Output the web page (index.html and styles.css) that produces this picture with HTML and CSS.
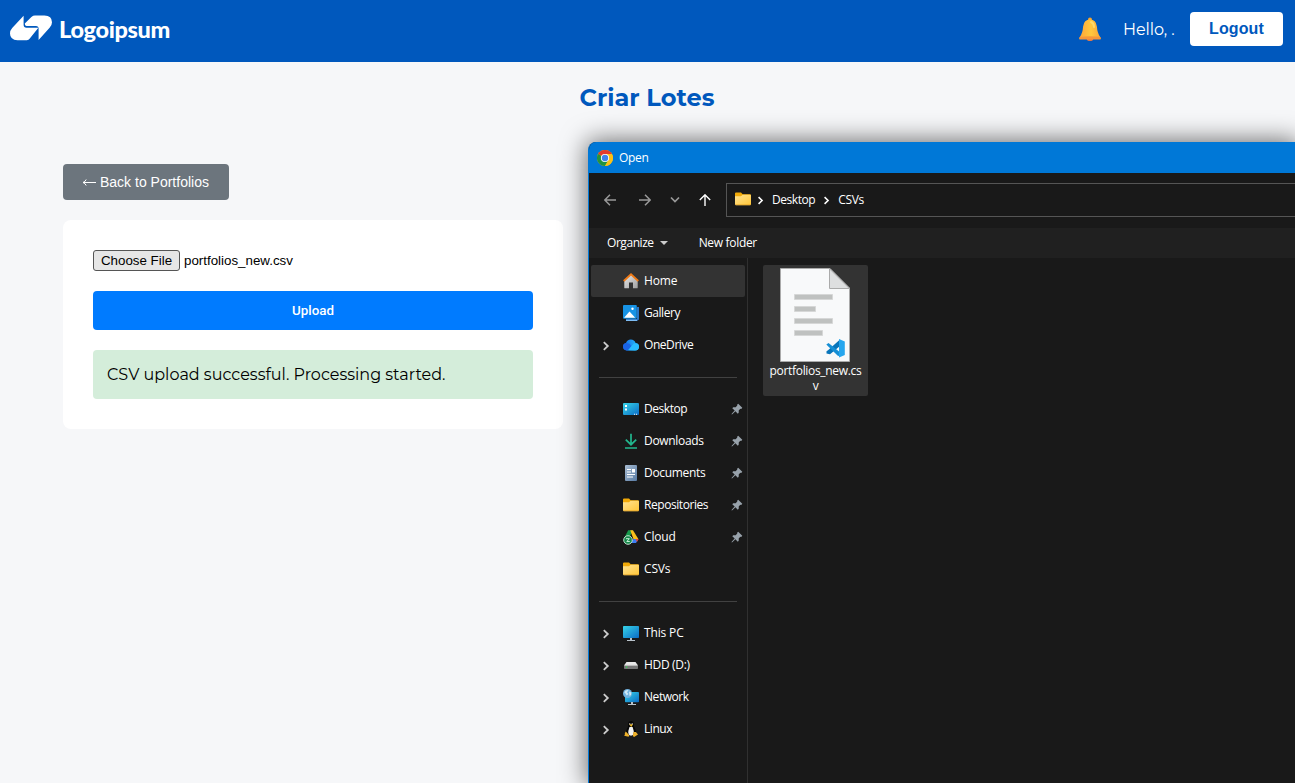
FILE: index.html
```html
<!DOCTYPE html>
<html lang="en">
<head>
<meta charset="utf-8">
<title>Criar Lotes</title>
<link rel="stylesheet" href="styles.css">
</head>
<body>
<svg class="defs" width="0" height="0" aria-hidden="true">
  <defs>
    <linearGradient id="gold" x1="0" y1="0" x2="1" y2="1"><stop offset="0" stop-color="#ffe394"/><stop offset="1" stop-color="#ffc637"/></linearGradient>
    <linearGradient id="screen" x1="0" y1="0" x2="1" y2="1"><stop offset="0" stop-color="#36d4e8"/><stop offset="1" stop-color="#0b6bc5"/></linearGradient>
    <linearGradient id="bell" x1="0" y1="0" x2="1" y2="0"><stop offset="0" stop-color="#ffa63a"/><stop offset=".55" stop-color="#ffc83d"/><stop offset="1" stop-color="#f9a63a"/></linearGradient>
    <linearGradient id="cloud" x1="0" y1="0" x2="1" y2="0"><stop offset="0" stop-color="#1667e8"/><stop offset="1" stop-color="#27c2fb"/></linearGradient>
    <linearGradient id="metal" x1="0" y1="0" x2="1" y2="1"><stop offset="0" stop-color="#e8e8e8"/><stop offset="1" stop-color="#a0a0a0"/></linearGradient>
    <linearGradient id="doc" x1="0" y1="0" x2="1" y2="1"><stop offset="0" stop-color="#a9bdd2"/><stop offset="1" stop-color="#587ba4"/></linearGradient>
  </defs>
  <symbol id="folder" viewBox="0 0 16 14"><path d="M0 1.5Q0 .4 1 .4H6L7.7 2.2H15Q16 2.2 16 3.3V8H0Z" fill="#f2aa08"/><path d="M0 4.2H6L7.7 2.7H15Q16 2.7 16 3.7V12Q16 13.2 14.8 13.2H1.2Q0 13.2 0 12Z" fill="url(#gold)"/><path d="M.4 12.7H15.6" stroke="#e5a52a" stroke-width=".7"/></symbol>
  <symbol id="chev" viewBox="0 0 8 10"><path d="M1.8 1.2 5.8 5 1.8 8.8" fill="none" stroke="currentColor" stroke-width="1.8"/></symbol>
  <symbol id="pin" viewBox="0 0 12 12"><path d="M7.2.7 11.3 4.8 10.2 5.9 9.4 5.7 7.8 7.3 7.7 9.8 6.8 10.7 4.4 8.3 1.3 11.3.6 11.4.7 10.7 3.7 7.6 1.3 5.2 2.2 4.3 4.7 4.2 6.3 2.6 6.1 1.8Z" fill="#98a2ab"/></symbol>
</svg>

<header class="topbar">
  <div class="brand">
    <svg width="42" height="26" viewBox="0 0 42 26"><path fill="#fff" d="M13.6 .8V9.8Q13.6 12.7 16.5 12.7H28.4L19.8 23.6Q18.7 25.2 16.8 25.2H7.5Q0 24.8 0 18.4 0 15.6 2.2 13.1Z"/><path fill="#fff" d="M28.6 25V13.6Q28.6 10.9 26 10.9H16.5Q14.6 10.8 14.8 8.6L21.4 2Q23.2 .6 25 .6H34.4Q42 .9 42 7.3 42 10.4 39.6 12.8Z"/></svg>
    <span class="brand-name">Logoipsum</span>
  </div>
  <div class="account">
    <svg class="bell" width="24" height="26" viewBox="0 0 24 26"><circle cx="12" cy="3.4" r="2" fill="#f6a22e"/><ellipse cx="12" cy="23" rx="3.2" ry="2" fill="#e87845"/><path d="M12 3.4Q18.1 3.4 18.9 10.5 19.3 17 22.2 21V22H1.8V21Q4.7 17 5.1 10.5 5.9 3.4 12 3.4Z" fill="url(#bell)"/><path d="M1.5 21Q12 19.4 22.5 21L23 23Q22.8 23.4 22 23.4H2Q1.2 23.4 1 23Z" fill="#f7973a"/><path d="M13 6Q15.8 7 16 11" stroke="#ffda69" stroke-width="2" fill="none" stroke-linecap="round"/></svg>
    <span class="hello">Hello, .</span>
    <button class="logout">Logout</button>
  </div>
</header>

<main class="page">
  <h1 class="title">Criar Lotes</h1>
  <button class="back"><svg width="14" height="8" viewBox="0 0 14 8"><path d="M14 4.5H1M4.2 1.5Q3.3 3.7 1 4.5 3.3 5.3 4.2 7.5" fill="none" stroke="#fff"/></svg><span>Back to Portfolios</span></button>
  <section class="card">
    <div class="file-row"><button class="choose">Choose File</button><span class="file-name">portfolios_new.csv</span></div>
    <button class="upload"><span>Upload</span></button>
    <p class="success">CSV upload successful. Processing started.</p>
  </section>
</main>

<div class="dialog-layer">
<div class="dialog" role="dialog">
  <div class="dialog-title">
    <svg width="16" height="16" viewBox="0 0 16 16"><circle cx="8" cy="8" r="8" fill="#fbc116"/><path d="M8 8 1.07 4A8 8 0 0 1 14.93 4Z" fill="#e33b2e"/><path d="M8 8 1.07 4A8 8 0 0 0 8 16L11.5 10Z" fill="#229342"/><path d="M8 4H14.93A8 8 0 0 1 8 16L11.5 10Z" fill="#fbc116"/><circle cx="8" cy="8" r="4.1" fill="#fff"/><circle cx="8" cy="8" r="3.2" fill="#4082ed"/></svg>
    <span>Open</span>
  </div>
  <div class="dialog-nav">
    <div class="arrows">
      <svg width="12" height="12" viewBox="0 0 12 12"><path d="M12 6H.8M6 .8.8 6 6 11.2" fill="none" stroke="#999" stroke-width="1.5"/></svg>
      <svg width="12" height="12" viewBox="0 0 12 12"><path d="M0 6H11.2M6 .8 11.2 6 6 11.2" fill="none" stroke="#999" stroke-width="1.5"/></svg>
      <svg width="10" height="12" viewBox="0 0 10 12"><path d="M1 3.5 5 7.5 9 3.5" fill="none" stroke="#999" stroke-width="1.7"/></svg>
      <svg width="12" height="12" viewBox="0 0 12 12"><path d="M6 12V.8M.8 6 6 .8 11.2 6" fill="none" stroke="#fff" stroke-width="1.4"/></svg>
    </div>
    <div class="path">
      <svg class="path-icon" width="16" height="14"><use href="#folder"/></svg>
      <svg class="sep1" width="7" height="9"><use href="#chev"/></svg>
      <span class="tight">Desktop</span>
      <svg class="sep2" width="7" height="9"><use href="#chev"/></svg>
      <span>CSVs</span>
    </div>
  </div>
  <div class="dialog-tools">
    <span class="tight">Organize</span>
    <svg class="caret" width="8" height="4" viewBox="0 0 8 4"><path d="M0 0H8L4 4Z" fill="#ccc"/></svg>
    <span>New folder</span>
  </div>
  <div class="dialog-body">
    <nav class="side">
      <div class="row active"><span class="exp"></span><svg class="ico" viewBox="0 0 16 16"><path d="M1.3 7.5 8 1.5 14.7 7.5V14.8Q14.7 15.3 14 15.3H10V9.5H6V15.3H2Q1.3 15.3 1.3 14.8Z" fill="url(#metal)"/><path d="M.7 8 8 1.3 15.3 8" fill="none" stroke="#ef7a16" stroke-width="1.8"/></svg><span class="loose">Home</span></div>
      <div class="row"><span class="exp"></span><svg class="ico" viewBox="0 0 16 16"><path d="M14 2H16V14.5L14 16H3V14H14Z" fill="#2876c7"/><rect width="13.8" height="13.8" rx="1" fill="#1793e5"/><path d="M1 12.8 6.5 6.5 12.2 12.8Z" fill="#fff"/><circle cx="9.5" cy="3.7" r="1.2" fill="#fff"/><path d="M3 15.4H14" stroke="#7ebcf3" stroke-width="1.2"/></svg><span class="tight">Gallery</span></div>
      <div class="row"><span class="exp"><svg width="8" height="10"><use href="#chev"/></svg></span><svg class="ico" viewBox="0 0 16 16"><path d="M3.8 13.4Q0 13.2 0 9.6 0 6.8 3 6.1 4.1 2.6 7.8 2.6 11.4 2.6 12.7 6.2 16 6.6 16 9.7 16 13.4 12 13.4Z" fill="url(#cloud)"/><path d="M3 6.1Q6.5 5.6 8.6 9.2L4.7 13.4H3.8Q0 13.2 0 9.6 0 6.8 3 6.1Z" fill="#1a64e6"/><path d="M5 13.3 9 8.4Q11 5.8 13 6.3 16 6.7 16 9.8 16 13.4 12 13.4Z" fill="#29bcff"/></svg><span class="tight">OneDrive</span></div>
      <hr class="rule">
      <div class="row"><span class="exp"></span><svg class="ico" viewBox="0 0 16 16"><rect y="2" width="16" height="12" rx="1" fill="url(#screen)"/><path d="M2 4H4V6H2ZM2 7.5H4V9.5H2ZM11 12.8H12V13.8H11ZM13 12.8H14V13.8H13Z" fill="#fff"/></svg><span class="tight">Desktop</span><svg class="pin"><use href="#pin"/></svg></div>
      <div class="row"><span class="exp"></span><svg class="ico" viewBox="0 0 16 16"><path d="M8 .8V11.2M2.8 6.7 8 11.7 13.2 6.7M2 15H14" fill="none" stroke="#22b88f" stroke-width="1.7"/></svg><span>Downloads</span><svg class="pin"><use href="#pin"/></svg></div>
      <div class="row"><span class="exp"></span><svg class="ico" viewBox="0 0 16 16"><rect x="2" width="12" height="16" rx="1" fill="url(#doc)"/><path d="M4 4.5H8M4 7H8M4 9.5H12M4 12H10" stroke="#fff"/><path d="M9 4H12V7.5H9Z" fill="#fff"/></svg><span>Documents</span><svg class="pin"><use href="#pin"/></svg></div>
      <div class="row"><span class="exp"></span><svg class="ico" viewBox="0 -1 16 16"><use href="#folder" width="16" height="14"/></svg><span class="tight">Repositories</span><svg class="pin"><use href="#pin"/></svg></div>
      <div class="row"><span class="exp"></span><svg class="ico" viewBox="0 0 16 16"><path d="M5.2 1.3H9.8L4.3 13 1.2 9Z" fill="#17994b"/><path d="M7.2 1.3H10L15.5 10.3H10.5Z" fill="#fbc01b"/><path d="M10.5 10H15.5L13 14H6.5Z" fill="#3c7cf1"/><path d="M12.5 10H15.5L14 13Z" fill="#e94335"/><circle cx="5" cy="11" r="4.3" fill="#18894b" stroke="#d2e9db" stroke-width=".9"/><path d="M3 9.7H6.4L3.8 12.5H6.8" stroke="#c8efd9" fill="none"/></svg><span class="loose">Cloud</span><svg class="pin"><use href="#pin"/></svg></div>
      <div class="row"><span class="exp"></span><svg class="ico" viewBox="0 -1 16 16"><use href="#folder" width="16" height="14"/></svg><span class="loose">CSVs</span></div>
      <hr class="rule">
      <div class="row"><span class="exp"><svg width="8" height="10"><use href="#chev"/></svg></span><svg class="ico" viewBox="0 0 16 16"><rect y="1" width="16" height="12" rx=".8" fill="url(#screen)"/><path d="M7 13H9V15H12V16H4V15H7Z" fill="#b9c3cb"/></svg><span class="loose">This PC</span></div>
      <div class="row"><span class="exp"><svg width="8" height="10"><use href="#chev"/></svg></span><svg class="ico" viewBox="0 0 16 16"><path d="M3.5 5H12.5L15 8.5H1Z" fill="#e9e9e9"/><rect x="1" y="8" width="14" height="4" rx=".7" fill="#777"/><path d="M1.5 8.3H14.5" stroke="#ccc"/><path d="M3 9.5H4.2V10.7H3Z" fill="#25e54b"/></svg><span>HDD (D:)</span></div>
      <div class="row"><span class="exp"><svg width="8" height="10"><use href="#chev"/></svg></span><svg class="ico" viewBox="0 0 16 16"><rect x="2" y="3" width="14" height="10.2" rx=".8" fill="url(#screen)"/><path d="M8 13H10V15H13V16H5V15H8Z" fill="#b9c3cb"/><circle cx="4.5" cy="4.5" r="4.5" fill="#72b2df"/><path d="M1.2 3.3Q3 0 5.6 1.2L4 3.2 5.5 5 3.7 6.5 2.5 4.5ZM6 2.5 8.3 3.4 8 6 6.5 7Z" fill="#cce8f6"/></svg><span class="tight">Network</span></div>
      <div class="row"><span class="exp"><svg width="8" height="10"><use href="#chev"/></svg></span><svg class="ico" viewBox="0 0 16 16"><path d="M5.2 3Q5.2 0 8 0 10.8 0 10.8 3.2 10.8 5.4 12.3 7.9 13.8 10.7 12.7 14H3.3Q2.2 10.5 3.9 7.9 5.3 5.6 5.2 3Z" fill="#070707"/><path d="M6.5 6.1H9.6Q12.7 14.7 8 14.7 3.3 14.7 6.5 6.1Z" fill="#f2f2f2"/><path d="M6 3.3H10L8.3 6Z" fill="#f0bb25"/><path d="M2.8 10.5 6.3 14.2 5.6 15.8 1.2 14.8Q2.3 13.4 1.8 12.2ZM10.5 10.9 12.9 11 15 13.6 11.1 16 9.8 15Z" fill="#eeb12a"/><circle cx="6.8" cy="2.8" r=".65" fill="#fff"/><circle cx="9.2" cy="2.8" r=".65" fill="#fff"/></svg><span class="tight">Linux</span></div>
    </nav>
    <div class="files">
      <div class="file">
        <svg width="70" height="94" viewBox="0 0 70 94"><path d="M.5.5H50L69.5 20V93.5H.5Z" fill="#f8f9fa" stroke="#aaa"/><path d="M49.5.8V20.5H69.3Z" fill="#dedfe0" stroke="#aaa"/><g fill="#bfc1c0" stroke="#d6d7d7"><path d="M14.5 26.5H52.5V31.5H14.5ZM14.5 38.5H35.5V43.5H14.5ZM14.5 50.5H52.5V55.5H14.5ZM14.5 62.5H42.5V67.5H14.5Z"/></g><path d="M60 71.5 48 82.3 46.5 83.3V85.5L50 86.2 60 78Z" fill="#0875ba"/><path d="M46.3 76.5 48.5 75 60 84.2V88.5L57.5 87.5Z" fill="#168fd5"/><path d="M59 71.1 64.8 73.4V87L59 89.4Z" fill="#26a6ee"/></svg>
        <span class="file-label"><span>portfolios_new.cs</span><span>v</span></span>
      </div>
    </div>
  </div>
</div>
</div>
</body>
</html>
```

FILE: styles.css
```css
* { box-sizing: border-box; }
html, body { height: 100%; }
body { margin: 0; background: #f6f7f9; overflow: hidden; position: relative; font-family: Montserrat, Inter, sans-serif; }
button { border: 0; font-family: "Liberation Sans", Arial, sans-serif; }
svg { display: block; flex: none; }
.defs { position: absolute; }

.topbar { height: 62px; padding: 0 12px 0 10px; background: #0058bd; display: flex; align-items: center; justify-content: space-between; color: #fff; }
.brand { display: flex; align-items: center; gap: 7px; padding-bottom: 6px; }
.brand-name { font: 900 23.5px/30px Lato, sans-serif; letter-spacing: -.35px; padding-top: 2px; }
.account { display: flex; align-items: center; height: 34px; margin-bottom: 4px; }
.bell { margin-right: 21px; }
.hello { width: 53px; margin-right: 14px; padding-top: 2px; font-size: 16px; line-height: 20px; white-space: nowrap; letter-spacing: -.05px; }
.logout { width: 93px; height: 34px; padding: 0; border-radius: 4px; background: #fff; color: #0058bd; font-size: 16px; font-weight: 700; letter-spacing: .1px; }

.page { padding: 21px 63px 0; display: flex; flex-direction: column; align-items: flex-start; }
.title { align-self: center; margin: 0 1px 0 0; color: #0058bd; font-size: 24px; line-height: 30px; font-weight: 700; white-space: nowrap; }
.back { margin-top: 51px; width: 166px; height: 36px; padding: 0 0 0 19px; display: flex; align-items: center; gap: 4px; background: #6c757d; color: #fff; border-radius: 4px; font-size: 14px; white-space: nowrap; }
.card { width: 500px; height: 209px; margin-top: 20px; padding: 30px; border-radius: 8px; background: #fff; display: flex; flex-direction: column; gap: 20px; }
.file-row { display: flex; align-items: center; gap: 4px; height: 21px; }
.choose { width: 87px; height: 21px; padding: 0; border: 1px solid #555; border-radius: 3px; background: #e6e6e6; color: #000; font-size: 13.333px; }
.file-name { font: 13.333px/20px "Liberation Sans", Arial, sans-serif; }
.upload { height: 39px; border-radius: 4px; background: #007bff; color: #fff; font: 500 13.333px Roboto, sans-serif; }
.success { height: 49px; margin: 0; padding: 0 14px; line-height: 49px; background: #d4edda; border-radius: 4px; color: #000; font-size: 16px; white-space: nowrap; }

.dialog-layer { position: absolute; inset: 62px 0 0 500px; padding: 80px 0 0 88px; overflow: hidden; pointer-events: none; }
.dialog { width: 100%; height: 100%; pointer-events: auto; border-left: 1px solid #0078d7; border-radius: 8px 0 0 0; overflow: hidden; background: #191919; box-shadow: 0 0 25px 3px rgba(0,0,0,.5), 20px 20px 25px 3px rgba(0,0,0,.3); color: #fff; font: 12px/16px "Open Sans", "Noto Sans", sans-serif; letter-spacing: -.32px; white-space: nowrap; display: flex; flex-direction: column; }
.tight { letter-spacing: -.44px; }
.loose { letter-spacing: -.15px; }
.dialog-title { height: 31px; flex: none; padding-left: 8px; display: flex; align-items: center; gap: 6px; background: #0078d7; }
.dialog-nav { height: 55px; flex: none; padding: 10px 0 0 15px; display: flex; }
.arrows { height: 34px; width: 122px; display: flex; align-items: center; }
.arrows svg:nth-child(2) { margin-left: 23px; }
.arrows svg:nth-child(3) { margin-left: 19px; }
.arrows svg:nth-child(4) { margin-left: 19px; }
.path { flex: 1; height: 34px; padding: 0 0 1px 8px; border: 1px solid #555; border-right: 0; display: flex; align-items: center; }
.path-icon { margin-bottom: 2px; }
.sep1 { margin: 2px 8px 0 6px; }
.sep2 { margin: 2px 8px 0; }
.dialog-tools { height: 30px; flex: none; padding-left: 18px; display: flex; align-items: center; background: #202020; }
.caret { margin: 0 31px 0 6px; }
.dialog-body { flex: 1; min-height: 0; display: flex; }
.side { width: 159px; padding: 7px 2px; border-right: 1px solid #303030; }
.row { width: 154px; height: 32px; display: flex; align-items: center; }
.row.active { background: #333; border-radius: 2px; }
.exp { width: 32px; padding: 1px 0 0 11px; color: #ccc; flex: none; }
.ico { width: 16px; height: 16px; margin-right: 5px; }
.pin { width: 12px; height: 12px; margin-left: auto; margin-right: 2px; }
.rule { width: 138px; height: 1px; margin: 16px 0 15px 8px; border: 0; background: #414141; }
.files { padding: 7px 0 0 15px; }
.file { width: 105px; height: 131px; padding-top: 3px; background: #333; border-radius: 2px; display: flex; flex-direction: column; align-items: center; }
.file svg { margin-left: -1px; }
.file-label { margin-top: 1px; display: flex; flex-direction: column; align-items: center; line-height: 15px; }
```
